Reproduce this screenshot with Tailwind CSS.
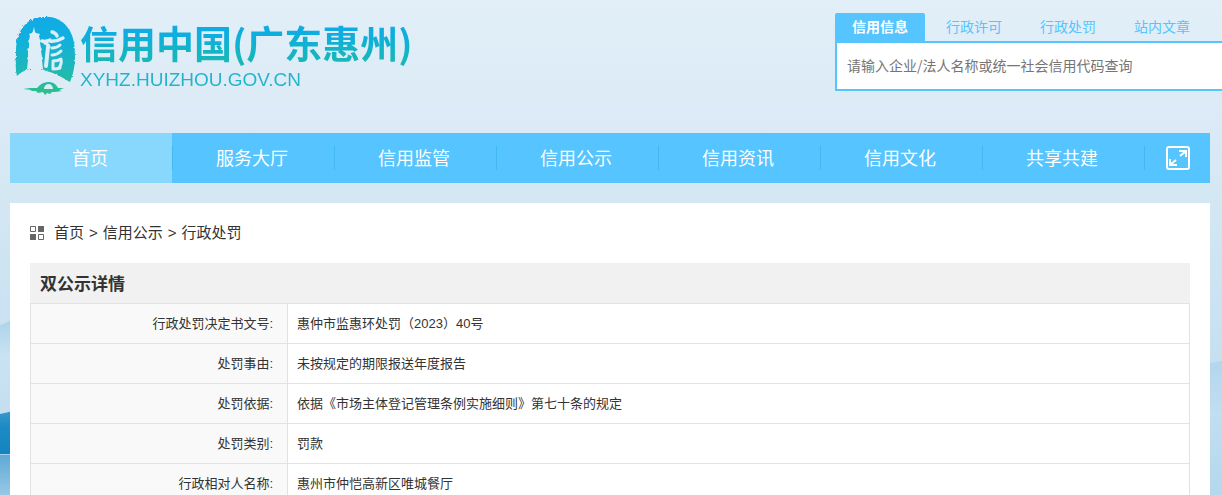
<!DOCTYPE html>
<html lang="zh-CN">
<head>
<meta charset="utf-8">
<title>信用中国(广东惠州)</title>
<script src="https://cdn.jsdelivr.net/npm/@tailwindcss/browser@4"></script>
</head>
<body class="font-['Noto_Sans_CJK_SC',sans-serif] text-[#333]">
<div class="relative isolate h-screen overflow-hidden bg-[linear-gradient(180deg,#e2eff8_0px,#dbeaf6_120px,#d4e8f3_190px,#cfe4f3_260px,#c4dff0_380px)]">
  <svg class="absolute inset-0 -z-10 h-full w-full" viewBox="0 0 1222 495" preserveAspectRatio="none" aria-hidden="true">
    <defs>
      <linearGradient id="hill" x1="0" y1="0" x2="0" y2="1"><stop offset="0" stop-color="#a9d1ea"/><stop offset=".4" stop-color="#c9e3f2"/><stop offset="1" stop-color="#c3def0"/></linearGradient>
      <linearGradient id="sea" x1="0" y1="0" x2="0" y2="1"><stop offset="0" stop-color="#3a9acd"/><stop offset=".4" stop-color="#1c8ac4"/><stop offset="1" stop-color="#1583bf"/></linearGradient>
      <linearGradient id="water" x1="0" y1="0" x2="0" y2="1"><stop offset="0" stop-color="#5fa9d6"/><stop offset="1" stop-color="#98c8e5"/></linearGradient>
      <linearGradient id="east" x1="0" y1="0" x2="0" y2="1"><stop offset="0" stop-color="#b3d6ed"/><stop offset=".4" stop-color="#c2def1"/><stop offset="1" stop-color="#b4d8ec"/></linearGradient>
    </defs>
    <path d="M0 325 Q6 323 20 316 V420 H0Z" fill="url(#hill)"/>
    <path d="M0 414 Q6 413 20 409 V455 H0Z" fill="url(#sea)"/>
    <path d="M0 455H20V495H0Z" fill="url(#water)"/>
    <path d="M0 454.500H20" stroke="#a5d0ea" stroke-width="1"/>
    <path d="M1200 366 Q1212 362 1222 361 V495 H1200Z" fill="url(#east)"/>
  </svg>

  <header class="flex h-[133px] items-start justify-between">
    <a href="#" class="ml-[14px] mt-[14px] flex" aria-label="信用中国(广东惠州)">
      <svg class="h-[82px] w-[62px]" viewBox="0 0 62 82" aria-hidden="true">
        <defs>
          <linearGradient id="ink" x1="0" y1="0" x2="0" y2="82" gradientUnits="userSpaceOnUse"><stop offset="0" stop-color="#10aae8"/><stop offset=".3" stop-color="#10b0de"/><stop offset=".7" stop-color="#1fb9b4"/><stop offset="1" stop-color="#2cc086"/></linearGradient>
          <filter id="rough" x="-5%" y="-5%" width="110%" height="110%"><feTurbulence type="fractalNoise" baseFrequency=".45" numOctaves="2" seed="4"/><feDisplacementMap in="SourceGraphic" scale="3"/></filter>
          <mask id="cut" maskUnits="userSpaceOnUse" x="0" y="0" width="62" height="82">
            <path fill="#fff" filter="url(#rough)" d="M30 3C40 2 48 6 54 14C60 22 61 32 61 44C61 54 58 63 56 68C50 65 43 59 32 57L28 55C20 53 10 55 3 62C1 54 2 46 2 36C2 25 6 14 14 8C19 4 24 3 30 3Z"/>
            <path fill="#000" d="M20 13l1 5 1 1 4 1-1 2 1 4 1 1-1 2 1 5 1 1-1 2 1 6 1 1-1 2 1 9H13l1-9-1-2 1-1 0-6-1-2 2-1 0-5-1-2 1-1 1-4-1-2 3-1 1-2z"/>
            <g fill="none" stroke="#000" stroke-linecap="round" stroke-linejoin="round">
              <path d="M38 18q4 1 5 4M28 27q4 1 8-1M36 27q6 1 13-3M31 29q3 1 4 4" stroke-width="3.400"/>
              <path d="M34 33q-1 10-2 19" stroke-width="4"/>
              <path d="M38 34q5 0 8-3M38 41q5 0 9-4M39 47q5 0 8-2q1 5-2 9M39 48v7M39 55q4 0 7-1" stroke-width="3"/>
            </g>
          </mask>
        </defs>
        <rect width="62" height="82" fill="url(#ink)" mask="url(#cut)"/>
        <path fill="url(#ink)" fill-rule="evenodd" d="M9 75l7-1 7 0C26 70 30 68 34 68C39 68 42 70 44 74l6 0-5 2 3 1-7 1-3 0-2 2-3-1-2 2-2-3-5 1-2-2-6 0 2-1zM30 75h9c0-3-2-5-4.500-5S30 72 30 75z"/>
      </svg>
      <span class="ml-1 block text-transparent">
        <span class="block bg-linear-to-b from-[#10aaea] from-20% to-[#1ab8b4] to-90% bg-clip-text text-[38px] leading-[55px] font-bold">信用中国(广东惠州)</span>
        <span class="block bg-linear-to-b from-[#1fb0d8] to-[#20b8bc] bg-clip-text font-['Liberation_Sans'] text-[19px] leading-[22px]">XYHZ.HUIZHOU.GOV.CN</span>
      </span>
    </a>
    <form class="mt-[13px] w-[387px]">
      <div class="flex gap-1 text-sm text-[#55c4ff]">
        <button type="button" class="h-7 w-[90px] rounded-t-[2px] bg-[#55c4ff] pb-0.5 font-bold text-white">信用信息</button>
        <button type="button" class="h-7 w-[90px] pb-0.5">行政许可</button>
        <button type="button" class="h-7 w-[90px] pb-0.5">行政处罚</button>
        <button type="button" class="h-7 w-[90px] pb-0.5">站内文章</button>
      </div>
      <input type="text" aria-label="查询" placeholder="请输入企业/法人名称或统一社会信用代码查询" class="block h-[50px] w-full border-2 border-r-0 border-[#55c4ff] bg-white px-[10px] pb-0.5 text-sm placeholder:text-[#757575]">
    </form>
  </header>

  <nav class="mr-3 ml-[10px] flex h-[50px] items-center bg-[#55c4ff] text-lg text-white">
    <a href="#" class="flex h-full w-[162px] items-center justify-center bg-[#88d7fd] pr-0.5 pb-0.5">首页</a>
    <a href="#" class="flex h-6 w-[162px] items-center justify-center border-l border-[#43b7f2] pr-[3px] pb-0.5">服务大厅</a>
    <a href="#" class="flex h-6 w-[162px] items-center justify-center border-l border-[#43b7f2] pr-[3px] pb-0.5">信用监管</a>
    <a href="#" class="flex h-6 w-[162px] items-center justify-center border-l border-[#43b7f2] pr-[3px] pb-0.5">信用公示</a>
    <a href="#" class="flex h-6 w-[162px] items-center justify-center border-l border-[#43b7f2] pr-[3px] pb-0.5">信用资讯</a>
    <a href="#" class="flex h-6 w-[162px] items-center justify-center border-l border-[#43b7f2] pr-[3px] pb-0.5">信用文化</a>
    <a href="#" class="flex h-6 w-[162px] items-center justify-center border-l border-[#43b7f2] pr-[3px] pb-0.5">共享共建</a>
    <button type="button" aria-label="展开" class="flex h-6 flex-1 items-center justify-center border-l border-[#43b7f2]">
      <svg class="size-6" viewBox="0 0 24 24" fill="none" stroke="#fff" stroke-width="2" aria-hidden="true"><rect x="1" y="1" width="22" height="22" rx="2"/><path d="M13 5h7v6M20 5l-6 5M4 13v6h7M4 19l6-5"/></svg>
    </button>
  </nav>

  <main class="mr-3 ml-[10px] mt-5 bg-white px-5 pb-10">
    <div class="flex h-[60px] items-center">
      <svg class="mr-[10px] size-[14px]" viewBox="0 0 14 14" fill="#666" aria-hidden="true"><path d="M8 0h6v6H8zM0 8h6v6H0z"/><path d="M.5 .5h5v5h-5zM8.500 8.500h5v5h-5z" fill="none" stroke="#666"/></svg>
      <div class="flex gap-[5px] font-['Liberation_Sans','Noto_Sans_CJK_SC',sans-serif] text-[15px]">
        <a href="#">首页</a><span>&gt;</span><a href="#">信用公示</a><span>&gt;</span><a href="#">行政处罚</a>
      </div>
    </div>
    <h1 class="bg-[#f1f1f1] px-[10px] text-[17px] leading-10 font-bold">双公示详情</h1>
    <table class="w-full table-fixed border-collapse font-['Liberation_Sans','Noto_Sans_CJK_SC',sans-serif] text-[13px]">
      <colgroup><col class="w-[257px]"><col></colgroup>
      <tbody>
        <tr class="h-10"><th class="border border-[#e2e2e2] bg-[#f9f9f9] pr-[14px] text-right font-normal">行政处罚决定书文号:</th><td class="border border-[#e2e2e2] px-[9px]">惠仲市监惠环处罚（2023）40号</td></tr>
        <tr class="h-10"><th class="border border-[#e2e2e2] bg-[#f9f9f9] pr-[14px] text-right font-normal">处罚事由:</th><td class="border border-[#e2e2e2] px-[9px]">未按规定的期限报送年度报告</td></tr>
        <tr class="h-10"><th class="border border-[#e2e2e2] bg-[#f9f9f9] pr-[14px] text-right font-normal">处罚依据:</th><td class="border border-[#e2e2e2] px-[9px]">依据《市场主体登记管理条例实施细则》第七十条的规定</td></tr>
        <tr class="h-10"><th class="border border-[#e2e2e2] bg-[#f9f9f9] pr-[14px] text-right font-normal">处罚类别:</th><td class="border border-[#e2e2e2] px-[9px]">罚款</td></tr>
        <tr class="h-10"><th class="border border-[#e2e2e2] bg-[#f9f9f9] pr-[14px] text-right font-normal">行政相对人名称:</th><td class="border border-[#e2e2e2] px-[9px]">惠州市仲恺高新区唯城餐厅</td></tr>
      </tbody>
    </table>
  </main>
</div>
</body>
</html>
